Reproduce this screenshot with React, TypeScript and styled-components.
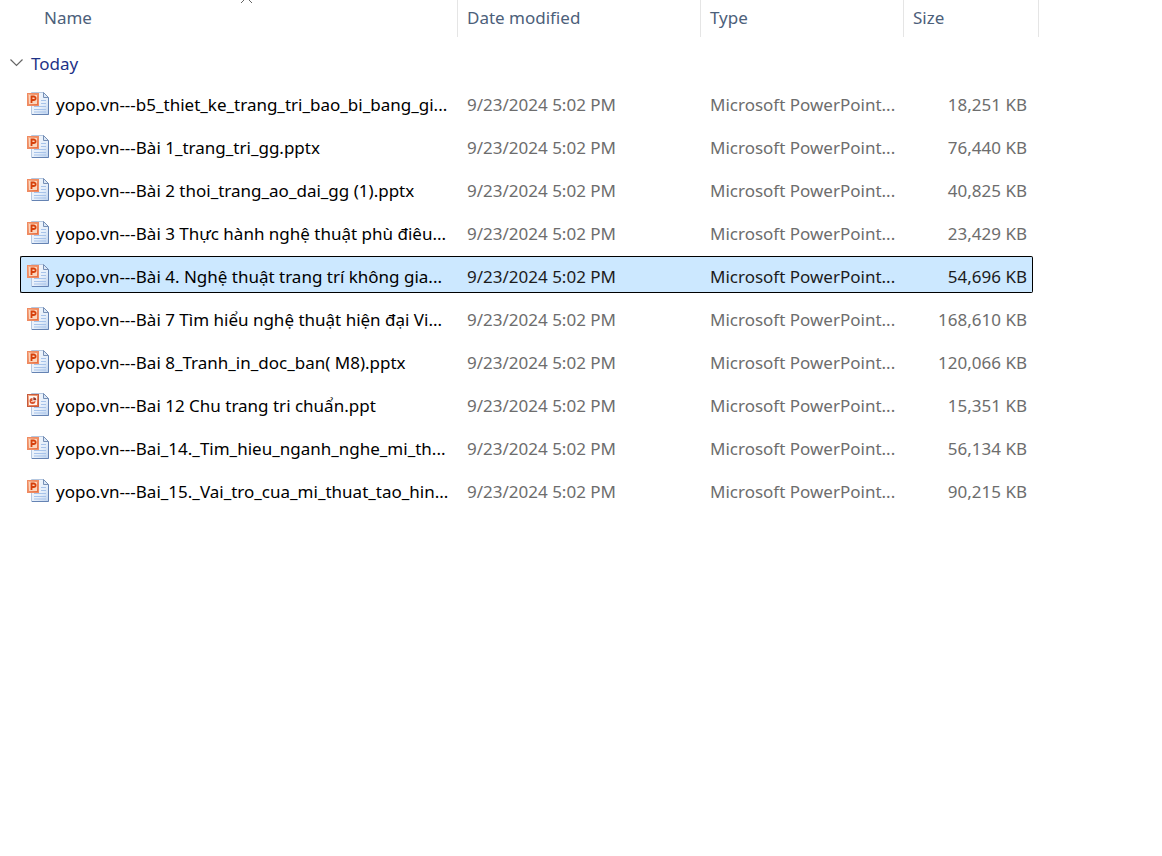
import React from "react";
import styled, { createGlobalStyle, css } from "styled-components";

const GlobalStyle = createGlobalStyle`
  * { box-sizing: border-box; }
  body {
    margin: 0;
    background: #fff;
    color: #000;
    font-family: "Noto Sans", "Open Sans", sans-serif;
    font-size: 17px;
    line-height: 24px;
  }
`;

const Page = styled.main`
  padding-right: 123px;
  overflow-x: hidden;
`;

const FileTable = styled.table`
  width: 100%;
  min-width: 900px;
  margin-top: -6px;
  table-layout: fixed;
  border-collapse: separate;
  border-spacing: 0 6px;
`;

const Column = styled.col<{ $width?: number }>`
  width: ${({ $width }) => ($width ? `${$width}px` : "auto")};
`;

const HeaderCell = styled.th<{ $first?: boolean }>`
  position: relative;
  height: 37px;
  padding: 0 0 2px ${({ $first }) => ($first ? 44 : 9)}px;
  border-right: 1px solid #e5e5e5;
  text-align: left;
  font-weight: 400;
`;

const plainButton = css`
  padding: 0;
  border: 0;
  background: none;
  font: inherit;
  text-align: left;
`;

const SortButton = styled.button`
  ${plainButton}
  display: block;
  width: 100%;
  color: #4c607a;
`;

const SortMark = styled.svg`
  position: absolute;
  top: -4px;
  left: 36px;
  right: 0;
  margin: 0 auto;
`;

const GroupCell = styled.th`
  height: 35px;
  padding: 6px 0 0 10px;
  font-weight: 400;
  text-align: left;
`;

const GroupButton = styled.button`
  ${plainButton}
  display: flex;
  align-items: center;
  gap: 8px;
  color: #1e3287;

  svg { margin-bottom: 2px; }
`;

const Cell = styled.td`
  height: 37px;
  padding: 4px 0 0 9px;
  color: #6d6d6d;
  white-space: nowrap;
  overflow: hidden;
`;

const NameCell = styled(Cell)`
  padding: 2px 0 0 7px;
  color: #000;
`;

const SizeCell = styled(Cell)`
  padding-right: 6px;
  text-align: right;
`;

const FileName = styled.div`
  display: flex;
  align-items: center;
  gap: 5px;

  svg { flex: none; }
  span { padding-top: 2px; }
`;

const FileRow = styled.tr<{ $selected: boolean }>`
  ${({ $selected }) =>
    $selected &&
    css`
      ${Cell} {
        background: #cce8ff;
        border-top: 1px solid #000;
        border-bottom: 1px solid #000;
        color: #1c1c1c;
      }
      ${Cell}:first-of-type { background: none; border: 0; }
      ${NameCell} {
        padding-left: 6px;
        border-left: 1px solid #000;
        border-radius: 2px 0 0 2px;
        color: #000;
      }
      ${SizeCell} {
        padding-right: 5px;
        border-right: 1px solid #000;
        border-radius: 0 2px 2px 0;
      }
    `}
`;

type FileKind = "pptx" | "ppt";

const FileIcon = ({ kind }: { kind: FileKind }) => (
  <svg width="24" height="24" viewBox="0 0 24 24" aria-hidden="true">
    <defs>
      <linearGradient id="sheet" x1="0" y1="0" x2="1" y2="1">
        <stop offset="0" stopColor="#f4f8fd" />
        <stop offset="0.6" stopColor="#e6effa" />
        <stop offset="1" stopColor="#bdd2ee" />
      </linearGradient>
      <linearGradient id="badge" x1="0" y1="0" x2="1" y2="1">
        <stop offset="0" stopColor="#f9b48f" />
        <stop offset="1" stopColor="#e5683a" />
      </linearGradient>
    </defs>
    <path d="M4.5 .5H16.5L21.5 5.5V22.5H4.5Z" fill="url(#sheet)" stroke="#b4c7e0" />
    <path d="M21.5 5.5V22.5H5" fill="none" stroke="#6583b3" />
    <path d="M16.5 .5V5.5H21.5Z" fill="#dce8f7" stroke="#7790b6" />
    <path d="M14 8.5H19M14 11.5H19M7 14.5H19M7 17.5H19M7 20H19" stroke="#a7c3ea" />
    <rect x=".5" y="1.5" width="11" height="12" fill="url(#badge)" stroke={kind === "ppt" ? "#c45b3e" : "#ef8b62"} />
    {kind === "pptx" ? (
      <>
        <rect x="2" y="3" width="8" height="9" fill="#fbd5bd" />
        <path d="M4.5 11V4.5H6.5C9.4 4.5 9.3 8 6.5 8H5" fill="none" stroke="#d6400b" strokeWidth="1.8" />
      </>
    ) : (
      <>
        <rect x="2" y="3" width="8" height="9" fill="#fff4ee" />
        <path d="M5.5 5A3 3 0 1 0 8.5 8H5.5Z" fill="#d9532c" />
        <path d="M6.3 4.3A3 3 0 0 1 9.3 7.3H6.3Z" fill="#8f3428" />
        <path d="M4 8.5H7.5" stroke="#f7c2a8" />
      </>
    )}
  </svg>
);

interface FileEntry {
  name: string;
  size: string;
  kind?: FileKind;
  selected?: boolean;
}

const files: FileEntry[] = [
  { name: "yopo.vn---b5_thiet_ke_trang_tri_bao_bi_bang_gi...", size: "18,251 KB" },
  { name: "yopo.vn---Bài 1_trang_tri_gg.pptx", size: "76,440 KB" },
  { name: "yopo.vn---Bài 2 thoi_trang_ao_dai_gg (1).pptx", size: "40,825 KB" },
  { name: "yopo.vn---Bài 3 Thực hành nghệ thuật phù điêu...", size: "23,429 KB" },
  { name: "yopo.vn---Bài 4. Nghệ thuật trang trí không gia...", size: "54,696 KB", selected: true },
  { name: "yopo.vn---Bài 7 Tìm hiểu nghệ thuật hiện đại Vi...", size: "168,610 KB" },
  { name: "yopo.vn---Bai 8_Tranh_in_doc_ban( M8).pptx", size: "120,066 KB" },
  { name: "yopo.vn---Bai 12 Chu trang tri chuẩn.ppt", size: "15,351 KB", kind: "ppt" },
  { name: "yopo.vn---Bai_14._Tim_hieu_nganh_nghe_mi_th...", size: "56,134 KB" },
  { name: "yopo.vn---Bai_15._Vai_tro_cua_mi_thuat_tao_hin...", size: "90,215 KB" },
];

export default function App() {
  return (
    <Page>
      <GlobalStyle />
      <FileTable>
        <colgroup>
          <Column $width={20} />
          <Column />
          <Column $width={243} />
          <Column $width={203} />
          <Column $width={129} />
          <Column $width={6} />
        </colgroup>
        <thead>
          <tr>
            <HeaderCell $first colSpan={2} aria-sort="ascending">
              <SortButton type="button">Name</SortButton>
              <SortMark width="13" height="8" viewBox="0 0 13 8" aria-hidden="true">
                <path d="M1 7L6.5 1.5L12 7" fill="none" stroke="#666" />
              </SortMark>
            </HeaderCell>
            <HeaderCell><SortButton type="button">Date modified</SortButton></HeaderCell>
            <HeaderCell><SortButton type="button">Type</SortButton></HeaderCell>
            <HeaderCell colSpan={2}><SortButton type="button">Size</SortButton></HeaderCell>
          </tr>
        </thead>
        <tbody>
          <tr>
            <GroupCell colSpan={6} scope="rowgroup">
              <GroupButton type="button" aria-expanded="true">
                <svg width="13" height="8" viewBox="0 0 13 8" aria-hidden="true">
                  <path d="M.5 .5L6.5 6.5L12.5 .5" fill="none" stroke="#666" strokeWidth="1.2" />
                </svg>
                Today
              </GroupButton>
            </GroupCell>
          </tr>
          {files.map(({ name, size, kind = "pptx", selected = false }) => (
            <FileRow key={name} $selected={selected} aria-selected={selected}>
              <Cell />
              <NameCell>
                <FileName>
                  <FileIcon kind={kind} />
                  <span>{name}</span>
                </FileName>
              </NameCell>
              <Cell>9/23/2024 5:02 PM</Cell>
              <Cell>Microsoft PowerPoint...</Cell>
              <SizeCell>{size}</SizeCell>
            </FileRow>
          ))}
        </tbody>
      </FileTable>
    </Page>
  );
}
